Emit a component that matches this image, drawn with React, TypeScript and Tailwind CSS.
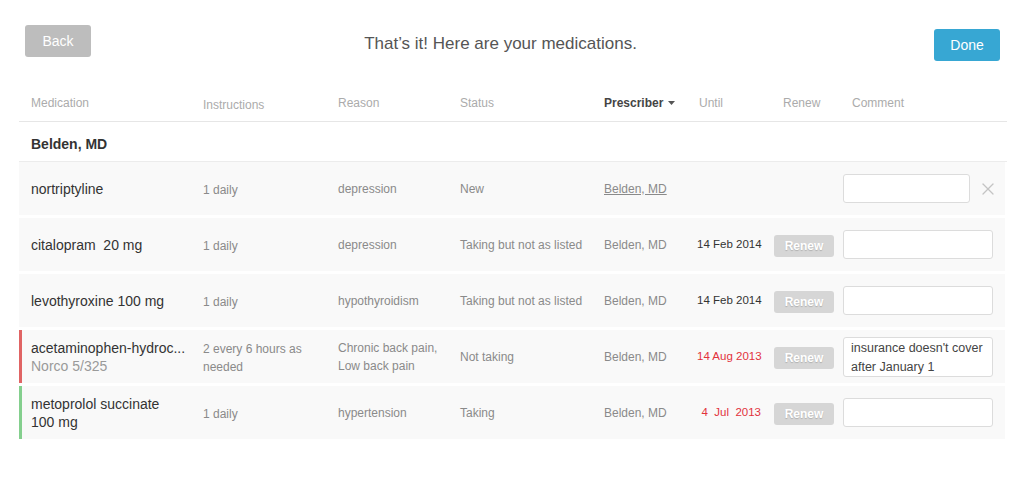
import { X } from 'lucide-react';

type Med = {
  name: string;
  sub?: string;
  instructions: string;
  reason: string;
  status: string;
  prescriber: string;
  link?: boolean;
  until?: string;
  expired?: boolean;
  comment?: string;
  flag?: 'red' | 'green';
  removable?: boolean;
};

const meds: Med[] = [
  { name: 'nortriptyline', instructions: '1 daily', reason: 'depression', status: 'New', prescriber: 'Belden, MD', link: true, removable: true },
  { name: 'citalopram\u00a0 20 mg', instructions: '1 daily', reason: 'depression', status: 'Taking but not as listed', prescriber: 'Belden, MD', until: '14 Feb 2014' },
  { name: 'levothyroxine 100 mg', instructions: '1 daily', reason: 'hypothyroidism', status: 'Taking but not as listed', prescriber: 'Belden, MD', until: '14 Feb 2014' },
  {
    name: 'acetaminophen-hydroc...',
    sub: 'Norco 5/325',
    instructions: '2 every 6 hours as needed',
    reason: 'Chronic back pain, Low back pain',
    status: 'Not taking',
    prescriber: 'Belden, MD',
    until: '14 Aug 2013',
    expired: true,
    comment: "insurance doesn't cover after January 1",
    flag: 'red',
  },
  { name: 'metoprolol succinate 100 mg', instructions: '1 daily', reason: 'hypertension', status: 'Taking', prescriber: 'Belden, MD', until: '4\u00a0 Jul\u00a0 2013', expired: true, flag: 'green' },
];

const cols = 'grid grid-cols-[172px_135px_122px_144px_93px_77px_69px_1fr]';

function RenewButton() {
  return (
    <button className="w-[60px] h-[22px] rounded-[3px] bg-[#d6d6d6] text-white text-[12px] font-bold [text-shadow:0_1px_1px_rgba(0,0,0,0.18)]">
      Renew
    </button>
  );
}

function MedRow({ med }: { med: Med }) {
  const flag =
    med.flag === 'red' ? 'border-[#e06464]' : med.flag === 'green' ? 'border-[#84cf8e]' : 'border-[#f9f9f9]';
  return (
    <div className={`${cols} items-center h-[53px] mb-[3px] bg-[#f9f9f9] border-l-[3px] ${flag} pl-[9px]`}>
      <div className="text-[14px] leading-[18px] text-[#333] pr-2">
        <div className={med.sub ? 'whitespace-nowrap' : 'w-[150px]'}>{med.name}</div>
        {med.sub && <div className="text-[#9a9a9a]">{med.sub}</div>}
      </div>
      <div className="mt-[3px] text-[12px] leading-[18px] text-[#8a8a8a] w-[120px]">{med.instructions}</div>
      <div className="text-[12px] leading-[18px] text-[#8a8a8a] w-[112px]">{med.reason}</div>
      <div className="text-[12px] text-[#8a8a8a] whitespace-nowrap">{med.status}</div>
      <div className={`text-[12px] text-[#8a8a8a] whitespace-nowrap ${med.link ? 'underline' : ''}`}>{med.prescriber}</div>
      <div className={`text-[11.5px] text-right pr-[13px] whitespace-nowrap ${med.expired ? 'text-[#e2323c]' : 'text-[#333]'}`}>
        {med.until}
      </div>
      <div>{med.until && <RenewButton />}</div>
      <div className="flex items-center">
        {med.comment ? (
          <div className="w-[150px] h-[40px] bg-white border border-[#dcdcdc] rounded-[3px] pl-[7px] pt-[1px] text-[12.5px] leading-[19px] text-[#444]">
            {med.comment}
          </div>
        ) : (
          <div className={`${med.removable ? 'w-[127px]' : 'w-[150px]'} h-[29px] bg-white border border-[#dcdcdc] rounded-[3px]`} />
        )}
        {med.removable && <X className="ml-[8px] w-[20px] h-[20px] text-[#c4c4c4]" strokeWidth={1.5} />}
      </div>
    </div>
  );
}

export default function App() {
  return (
    <div className="w-[1024px] h-[477px] bg-white font-['Liberation_Sans',Arial,sans-serif] overflow-hidden">
      {/* Top bar */}
      <div className="flex items-start h-[85px] pl-[25px] pr-[24px]">
        <button className="mt-[25px] w-[66px] h-[32px] rounded-[3px] bg-[#bdbdbd] text-white text-[14px]">Back</button>
        <div className="flex-1 pr-[24px] pt-[34px] text-center text-[17px] leading-[20px] text-[#555]">
          That’s it! Here are your medications.
        </div>
        <button className="mt-[29px] w-[66px] h-[32px] rounded-[3px] bg-[#37a7d3] text-white text-[14px]">Done</button>
      </div>

      <div className="ml-[19px] mr-[17px]">
        {/* Column headers */}
        <div className={`${cols} items-center h-[37px] pl-[12px] border-b border-[#e6e6e6] text-[12px] text-[#ababab]`}>
          <div>Medication</div>
          <div className="mt-[3px]">Instructions</div>
          <div>Reason</div>
          <div>Status</div>
          <div className="flex items-center font-bold text-[#444]">
            Prescriber
            <svg className="ml-[5px]" width="7" height="4" viewBox="0 0 7 4">
              <polygon points="0,0 7,0 3.5,4" fill="#555" />
            </svg>
          </div>
          <div className="pl-[2px]">Until</div>
          <div className="pl-[9px]">Renew</div>
          <div className="pl-[9px]">Comment</div>
        </div>

        {/* Group */}
        <div className="h-[40px] flex items-end pb-[6px] pl-[12px] border-b border-[#ececec] text-[14px] font-bold text-[#333]">
          Belden, MD
        </div>

        <div className="w-[986px]">
          {meds.map((m) => (
            <MedRow key={m.name} med={m} />
          ))}
        </div>
      </div>
    </div>
  );
}
